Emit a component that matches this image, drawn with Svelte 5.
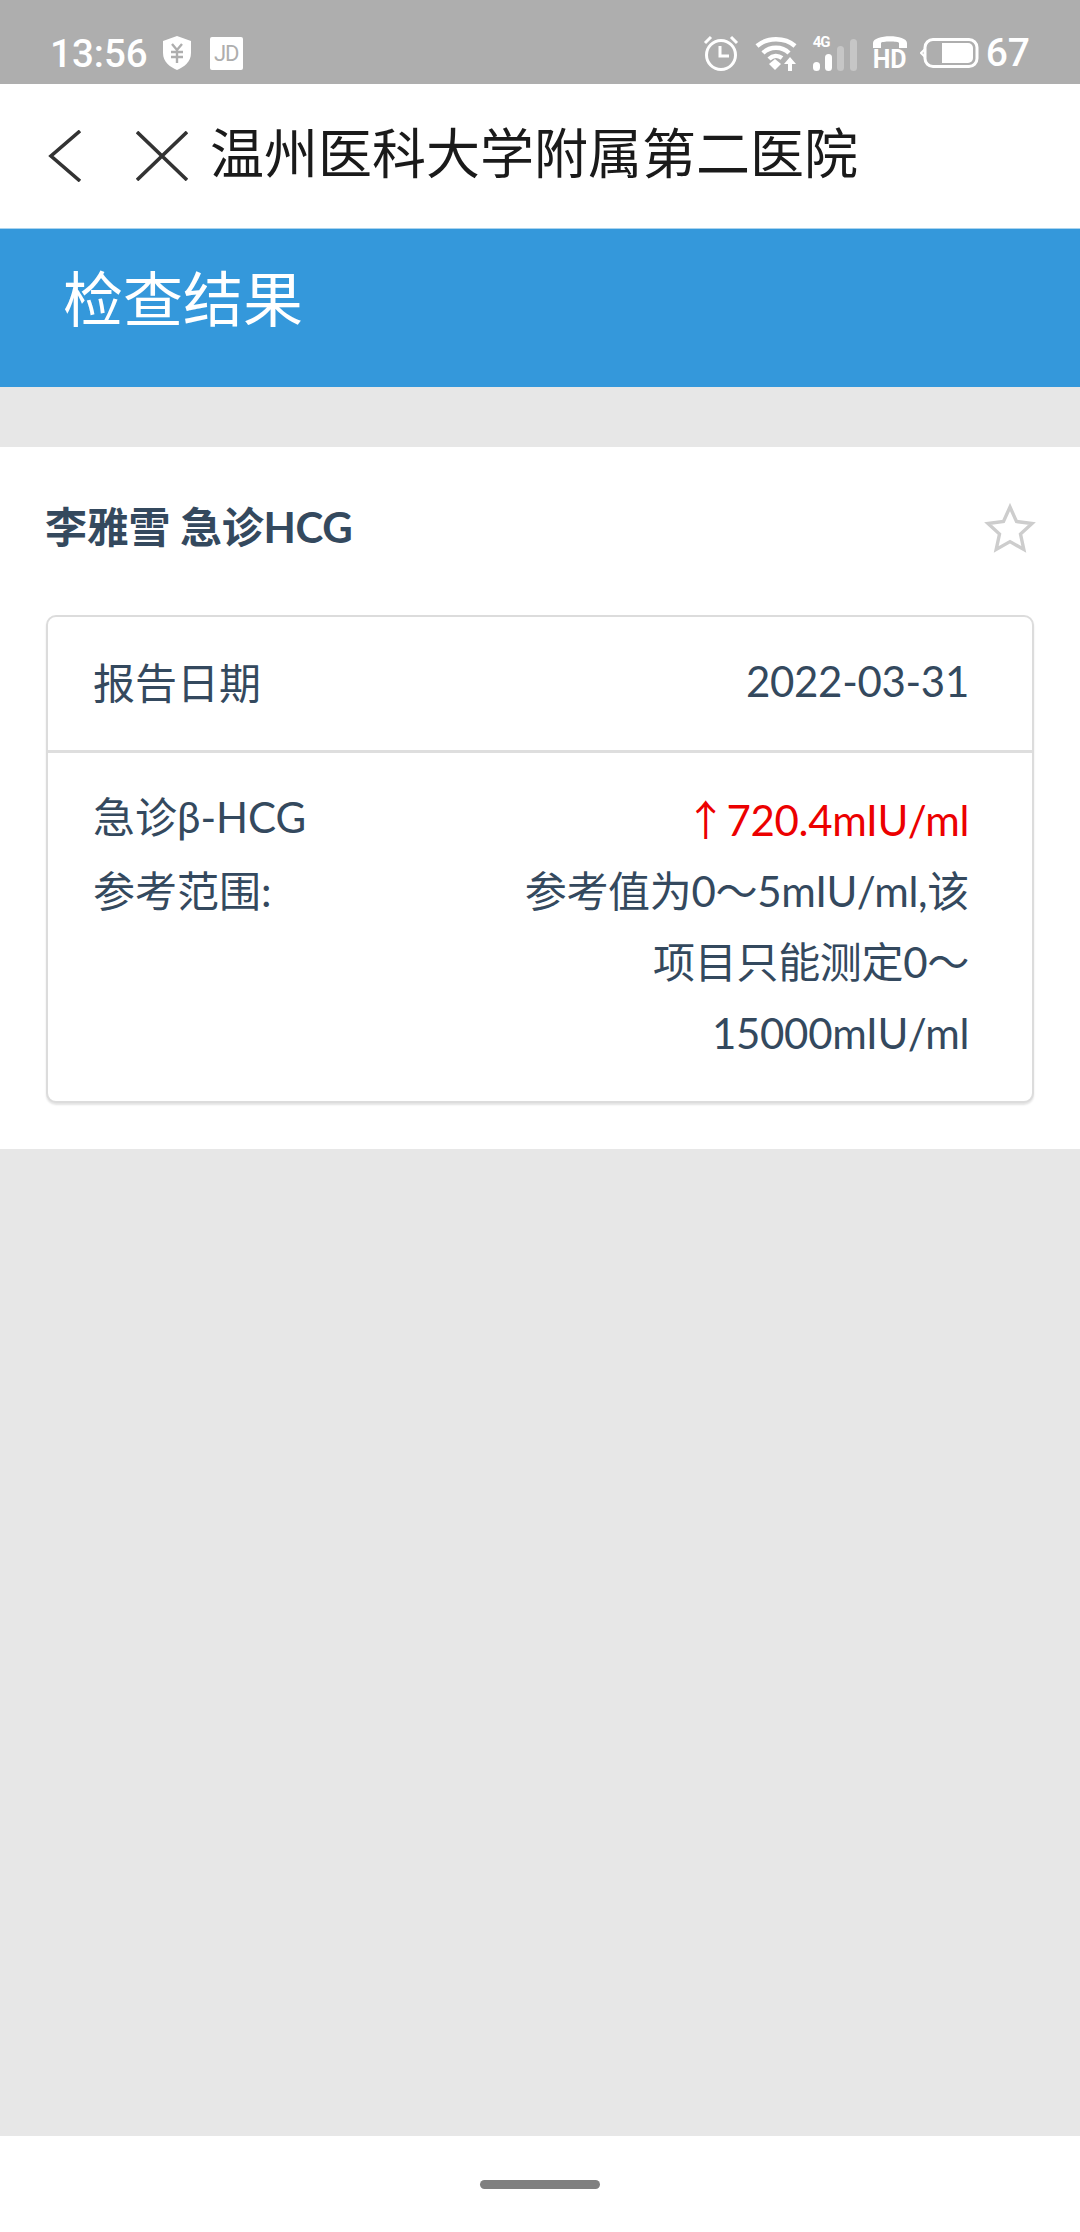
<script>
	const rows = [
		{ label: "急诊β-HCG", value: "720.4mIU/ml", high: true },
		{ label: "参考范围:", value: "参考值为0～5mIU/ml,该项目只能测定0～15000mIU/ml" }
	];
</script>

<div class="page">
	<div class="status">
		<div class="status-left">
			<span class="time">13:56</span>
			<svg class="shield" width="30" height="36" viewBox="0 0 30 36">
				<path d="M15 1 L29 6 V18 C29 27 22 32 15 35 C8 32 1 27 1 18 V6 Z" fill="#fff" />
				<path d="M10 9 L15 15 L20 9 M9 17 H21 M9 22 H21 M15 15 V28" fill="none" stroke="#aeaeae" stroke-width="2.4" />
			</svg>
			<span class="jd">JD</span>
		</div>
		<div class="status-right">
			<svg width="36" height="36" viewBox="0 0 36 36" fill="none" stroke="#fff">
				<circle cx="18" cy="20" r="14.5" stroke-width="3" />
				<path d="M17 11 V21 H26" stroke-width="3" />
				<path d="M2 8 L8 2 M34 8 L28 2" stroke-width="3" />
			</svg>
			<svg class="wifi" width="42" height="36" viewBox="0 0 42 36" fill="none" stroke="#fff" stroke-width="4.4">
				<path d="M2 11 C12 2 30 2 40 11 M8 18 C15 11 27 11 34 18 M14 24 C18 20 23 20 27 23" />
				<path d="M14 29 L20 24 L26 29 L20 35 Z" fill="#fff" stroke="none" />
				<path d="M29 29 L35 22 L41 29 H37 V36 H33 V29 Z" fill="#fff" stroke="none" />
			</svg>
			<div class="signal">
				<span class="g4">4G</span>
				<svg width="44" height="32" viewBox="0 0 44 32">
					<rect x="0" y="23" width="7" height="9" rx="3.5" fill="#fff" />
					<rect x="12" y="15" width="7" height="17" rx="3.5" fill="#fff" />
					<rect x="24" y="7" width="7" height="25" rx="3.5" fill="#c6c6c6" />
					<rect x="37" y="0" width="7" height="32" rx="3.5" fill="#c6c6c6" />
				</svg>
			</div>
			<div class="hd">
				<svg width="36" height="14" viewBox="0 0 36 14">
					<path d="M1 13 V8 C1 -1 35 -1 35 8 V13 H27 V8 C27 6 9 6 9 8 V13 Z" fill="#fff" />
				</svg>
				<span>HD</span>
			</div>
			<svg class="battery" width="59" height="30" viewBox="0 0 59 30">
				<path d="M5 11 L1 15 L5 19" fill="none" stroke="#fff" stroke-width="2" />
				<rect x="5" y="1.5" width="52" height="27" rx="8" fill="none" stroke="#fff" stroke-width="3" />
				<path d="M22 5 H48 A5 5 0 0 1 53 10 V20 A5 5 0 0 1 48 25 H22 Z" fill="#fff" />
			</svg>
			<span class="level">67</span>
		</div>
	</div>

	<div class="nav">
		<svg class="back" width="34" height="52" viewBox="0 0 34 52" fill="none" stroke="#333" stroke-width="3.6">
			<path d="M32 1 L3 26 L32 51" />
		</svg>
		<svg class="close" width="52" height="50" viewBox="0 0 52 50" fill="none" stroke="#333" stroke-width="3.6">
			<path d="M1 1 L51 49 M51 1 L1 49" />
		</svg>
		<span class="nav-title">温州医科大学附属第二医院</span>
	</div>

	<div class="banner">检查结果</div>

	<div class="content">
		<div class="head">
			<span class="name">李雅雪 急诊HCG</span>
			<svg class="star" width="52" height="50" viewBox="0 0 52 50">
				<path d="M26 4 L32.5 18.5 L48 20.5 L36.5 31 L39.8 46.5 L26 38.6 L12.2 46.5 L15.5 31 L4 20.5 L19.5 18.5 Z" fill="none" stroke="#cdcdcd" stroke-width="3.4" />
			</svg>
		</div>

		<div class="card">
			<div class="card-top">
				<span>报告日期</span>
				<span class="date">2022-03-31</span>
			</div>
			<div class="card-body">
				{#each rows as row}
					<div class="row">
						<div class="label">{row.label}</div>
						<div class="value" class:high={row.high}>{#if row.high}<span class="arrow">↑</span>{/if}{row.value}</div>
					</div>
				{/each}
			</div>
		</div>
	</div>

	<div class="empty"></div>

	<div class="bottom">
		<div class="pill"></div>
	</div>
</div>

<style>
	:global(body) {
		margin: 0;
		background: #e7e7e7;
	}

	.page {
		width: 1080px;
		height: 2232px;
		display: flex;
		flex-direction: column;
		font-family: "Lato", "Noto Sans CJK SC", sans-serif;
		color: #34495e;
		overflow: hidden;
	}

	.status {
		height: 84px;
		flex: none;
		background: #aeaeae;
		box-sizing: border-box;
		padding: 22px 50px 0 50px;
		display: flex;
		justify-content: space-between;
		align-items: center;
		color: #fff;
		font-family: "Roboto", sans-serif;
	}

	.status-left,
	.status-right {
		display: flex;
		align-items: center;
	}

	.time {
		font-size: 38.5px;
		font-weight: 500;
	}

	.shield {
		margin-left: 14px;
	}

	.jd {
		margin-left: 18px;
		width: 33px;
		height: 33px;
		background: #fff;
		border-radius: 2px;
		color: #aeaeae;
		font-size: 22px;
		line-height: 33px;
		text-align: center;
		letter-spacing: -1px;
	}

	.wifi {
		margin-left: 16px;
	}

	.signal {
		position: relative;
		margin-left: 16px;
		width: 44px;
		height: 36px;
		display: flex;
		align-items: flex-end;
	}

	.g4 {
		position: absolute;
		left: 0;
		top: -1px;
		font-size: 15px;
		font-weight: 700;
		line-height: 16px;
		letter-spacing: -1px;
	}

	.hd {
		margin-left: 15px;
		display: flex;
		flex-direction: column;
		align-items: center;
		height: 36px;
	}

	.hd span {
		font-size: 25px;
		font-weight: 700;
		line-height: 20px;
		margin-top: 1px;
	}

	.battery {
		margin-left: 12px;
	}

	.level {
		margin-left: 7px;
		font-size: 39px;
		font-weight: 500;
	}

	.nav {
		height: 145px;
		flex: none;
		background: #fff;
		display: flex;
		align-items: center;
		box-sizing: border-box;
		padding-left: 48px;
		border-bottom: 1px solid #a9d3ee;
	}

	.close {
		margin-left: 54px;
	}

	.nav-title {
		margin-left: 22px;
		margin-bottom: 12px;
		font-size: 54px;
		color: #1a1a1a;
		font-family: "Noto Sans CJK SC", sans-serif;
	}

	.banner {
		height: 158px;
		flex: none;
		background: #3498db;
		color: #fff;
		box-sizing: border-box;
		padding-left: 63px;
		font-size: 60px;
		line-height: 141px;
	}

	.content {
		margin-top: 60px;
		background: #fff;
		padding: 0 46px 46px;
		flex: none;
	}

	.head {
		height: 168px;
		display: flex;
		justify-content: space-between;
		align-items: center;
		font-size: 42px;
		font-weight: 700;
		margin-right: -2px;
	}

	.name {
		margin-bottom: 14px;
		margin-left: -1px;
		letter-spacing: -0.3px;
	}

	.star {
		margin-bottom: 6px;
	}

	.card {
		border: 2px solid #dcdcdc;
		border-radius: 10px;
		box-shadow: 0 2px 2px #e4e4e4;
		background: #fff;
		font-size: 42px;
	}

	.card-top {
		height: 136px;
		box-sizing: border-box;
		display: flex;
		justify-content: space-between;
		align-items: center;
		padding: 0 63px 6px 45px;
		border-bottom: 3px solid #dedede;
	}

	.date {
		letter-spacing: -0.3px;
	}

	.card-body {
		padding: 29px 63px 32px 45px;
	}

	.row {
		display: flex;
		justify-content: space-between;
		line-height: 71px;
	}

	.value {
		width: 460px;
		text-align: right;
		letter-spacing: -0.3px;
	}

	.high {
		color: #ec0000;
	}

	.arrow {
		font-family: "Noto Sans CJK SC", sans-serif;
	}

	.empty {
		flex: 1;
	}

	.bottom {
		height: 96px;
		flex: none;
		background: #fff;
		display: flex;
		justify-content: center;
		align-items: center;
	}

	.pill {
		width: 120px;
		height: 9px;
		border-radius: 5px;
		background: #808080;
	}
</style>
